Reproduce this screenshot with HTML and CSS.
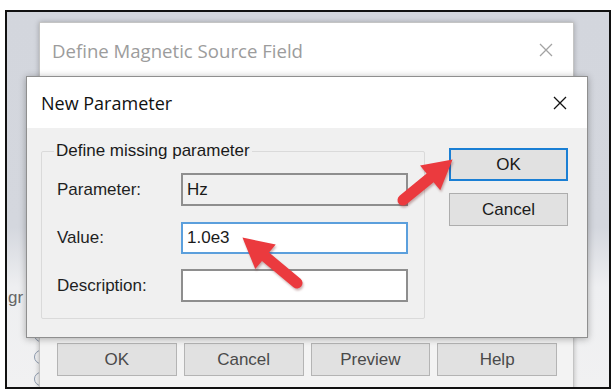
FILE: index.html
```html
<!DOCTYPE html>
<html lang="en">
  <head>
    <meta charset="UTF-8" />
    <meta name="viewport" content="width=device-width, initial-scale=1.0" />
    <title>New Parameter</title>
    <link rel="stylesheet" href="styles.css">
  </head>
  <body>
    <div class="frame">
      <div class="desk">

        <div class="under">
          <span class="under-label">gr</span>
          <div class="radios">
            <span class="radio"></span>
            <span class="radio"></span>
            <span class="radio"></span>
          </div>
        </div>

        <section class="win back">
          <header class="back-head">
            <span class="back-title">Define Magnetic Source Field</span>
            <svg class="close" width="14" height="14" viewBox="0 0 14 14">
              <path d="M1 1 L13 13 M13 1 L1 13" stroke="#a3a3a3" stroke-width="1.3" fill="none" />
            </svg>
          </header>
          <div class="back-body"></div>
          <div class="back-foot">
            <button class="btn btn-dim">OK</button>
            <button class="btn btn-dim">Cancel</button>
            <button class="btn btn-dim">Preview</button>
            <button class="btn btn-dim">Help</button>
          </div>
        </section>

        <section class="win front">
          <header class="front-head">
            <span class="front-title">New Parameter</span>
            <svg class="close" width="14" height="14" viewBox="0 0 14 14">
              <path d="M1 1 L13 13 M13 1 L1 13" stroke="#111" stroke-width="1.3" fill="none" />
            </svg>
          </header>
          <div class="front-body">
            <fieldset class="group">
              <legend>Define missing parameter</legend>
              <div class="rows">
                <label>Parameter:</label>
                <div class="field field-ro">Hz</div>
                <label>Value:</label>
                <div class="field field-focus">1.0e3</div>
                <label>Description:</label>
                <div class="field"></div>
              </div>
            </fieldset>
            <div class="side">
              <button class="btn btn-default">OK</button>
              <button class="btn">Cancel</button>
            </div>
          </div>
        </section>

        <!-- callout arrows drawn over the dialog -->
        <svg class="arrows" width="602" height="375" viewBox="0 0 602 375">
          <g transform="translate(290 271) rotate(219.8)">
            <path d="M0 -5.5 L41 -5.5 L41 -16 L71 0 L41 16 L41 5.5 L0 5.5 A5.5 5.5 0 0 1 0 -5.5 Z" />
          </g>
          <g transform="translate(396 188) rotate(-39.2)">
            <path d="M0 -5.5 L35 -5.5 L35 -16 L64 0 L35 16 L35 5.5 L0 5.5 A5.5 5.5 0 0 1 0 -5.5 Z" />
          </g>
        </svg>

      </div>
    </div>
  </body>
</html>
```

FILE: styles.css
```css
body {
  margin: 0;
  background: #fff;
  font-family: "Liberation Sans", Arial, sans-serif;
}
.frame {
  margin: 10px 0 0 5px;
  width: 606px;
  height: 379px;
  box-sizing: border-box;
  border: 2px solid #111;
  overflow: hidden;
}
.desk {
  position: relative;
  width: 100%;
  height: 100%;
  background: linear-gradient(#d3d6dd 0, #d4d7de 215px, #eeeff1 275px, #f1f1f2 100%);
}

/* window lying under everything */
.under {
  position: absolute;
  left: 1px;
  top: 276px;
  width: 45px;
  height: 110px;
}
.under-label {
  display: block;
  font-size: 17px;
  color: #666;
}
.radios {
  display: flex;
  flex-direction: column;
  gap: 8px;
  margin: 20px 0 0 26px;
}
.radio {
  width: 12px;
  height: 12px;
  border: 1.5px solid #8d9aae;
  border-radius: 50%;
}

.win {
  position: absolute;
  box-sizing: border-box;
}

/* back dialog */
.back {
  left: 32px;
  top: 10px;
  width: 535px;
  height: 400px;
  background: #f3f3f3;
  border: 1px solid #c4c4c4;
  box-shadow: 0 0 5px rgba(0, 0, 0, 0.25);
  display: flex;
  flex-direction: column;
}
.back-head {
  height: 54px;
  background: #fff;
  display: flex;
  align-items: center;
  justify-content: space-between;
  padding: 0 20px 0 12px;
}
.back-title {
  font-family: "Open Sans", sans-serif;
  font-size: 18.6px;
  color: #9c9c9c;
}
.back-body {
  height: 266px;
}
.back-foot {
  display: grid;
  grid-template-columns: repeat(4, 1fr);
  gap: 7px;
  width: 500px;
  margin-left: 17px;
}

/* front dialog */
.front {
  left: 19px;
  top: 64px;
  width: 562px;
  height: 262px;
  background: #f0f0f0;
  border: 1px solid #8f8f8f;
  box-shadow: 0 1px 7px rgba(0, 0, 0, 0.3);
}
.front-head {
  height: 51px;
  background: #fff;
  display: flex;
  align-items: center;
  justify-content: space-between;
  padding: 0 20px 0 14px;
}
.front-title {
  font-family: "Open Sans", sans-serif;
  font-size: 18px;
  color: #111;
}
.front-body {
  display: flex;
  align-items: flex-start;
}

.group {
  margin: 13px 0 0 14px;
  padding: 0 16px 16px 15px;
  border: 1px solid #dadada;
  border-radius: 2px;
}
.group legend {
  padding: 0 2px;
  margin-left: -3px;
  font-size: 17px;
  line-height: 20px;
  color: #1a1a1a;
}
.rows {
  display: grid;
  grid-template-columns: 124px 227px;
  grid-auto-rows: 33px;
  row-gap: 15px;
  align-items: center;
  margin-top: 12px;
}
.rows label {
  font-size: 17px;
  color: #1f1f1f;
}
.field {
  box-sizing: border-box;
  height: 33px;
  border: 2px solid #8e8e8e;
  background: #fff;
  padding: 0 4px;
  font-size: 17px;
  line-height: 29px;
  color: #1a1a1a;
}
.field-ro {
  background: #f0f0f0;
}
.field-focus {
  height: 32px;
  line-height: 28px;
  border-color: #5b9fdc;
}

.side {
  display: flex;
  flex-direction: column;
  gap: 12px;
  margin: 20px 0 0 24px;
}
.btn {
  box-sizing: border-box;
  width: 119px;
  height: 33px;
  padding: 0;
  background: #e1e1e1;
  border: 1px solid #adadad;
  font-family: "Liberation Sans", Arial, sans-serif;
  font-size: 17px;
  color: #1a1a1a;
}
.btn-default {
  border: 2px solid #1a7fd4;
}
.btn-dim {
  width: auto;
  color: #4a4a4a;
  border-color: #b4b4b4;
}

.arrows {
  position: absolute;
  left: 0;
  top: 0;
  fill: #eb3a3e;
  filter: drop-shadow(1px 2px 1px rgba(90, 0, 0, 0.3));
}
```
